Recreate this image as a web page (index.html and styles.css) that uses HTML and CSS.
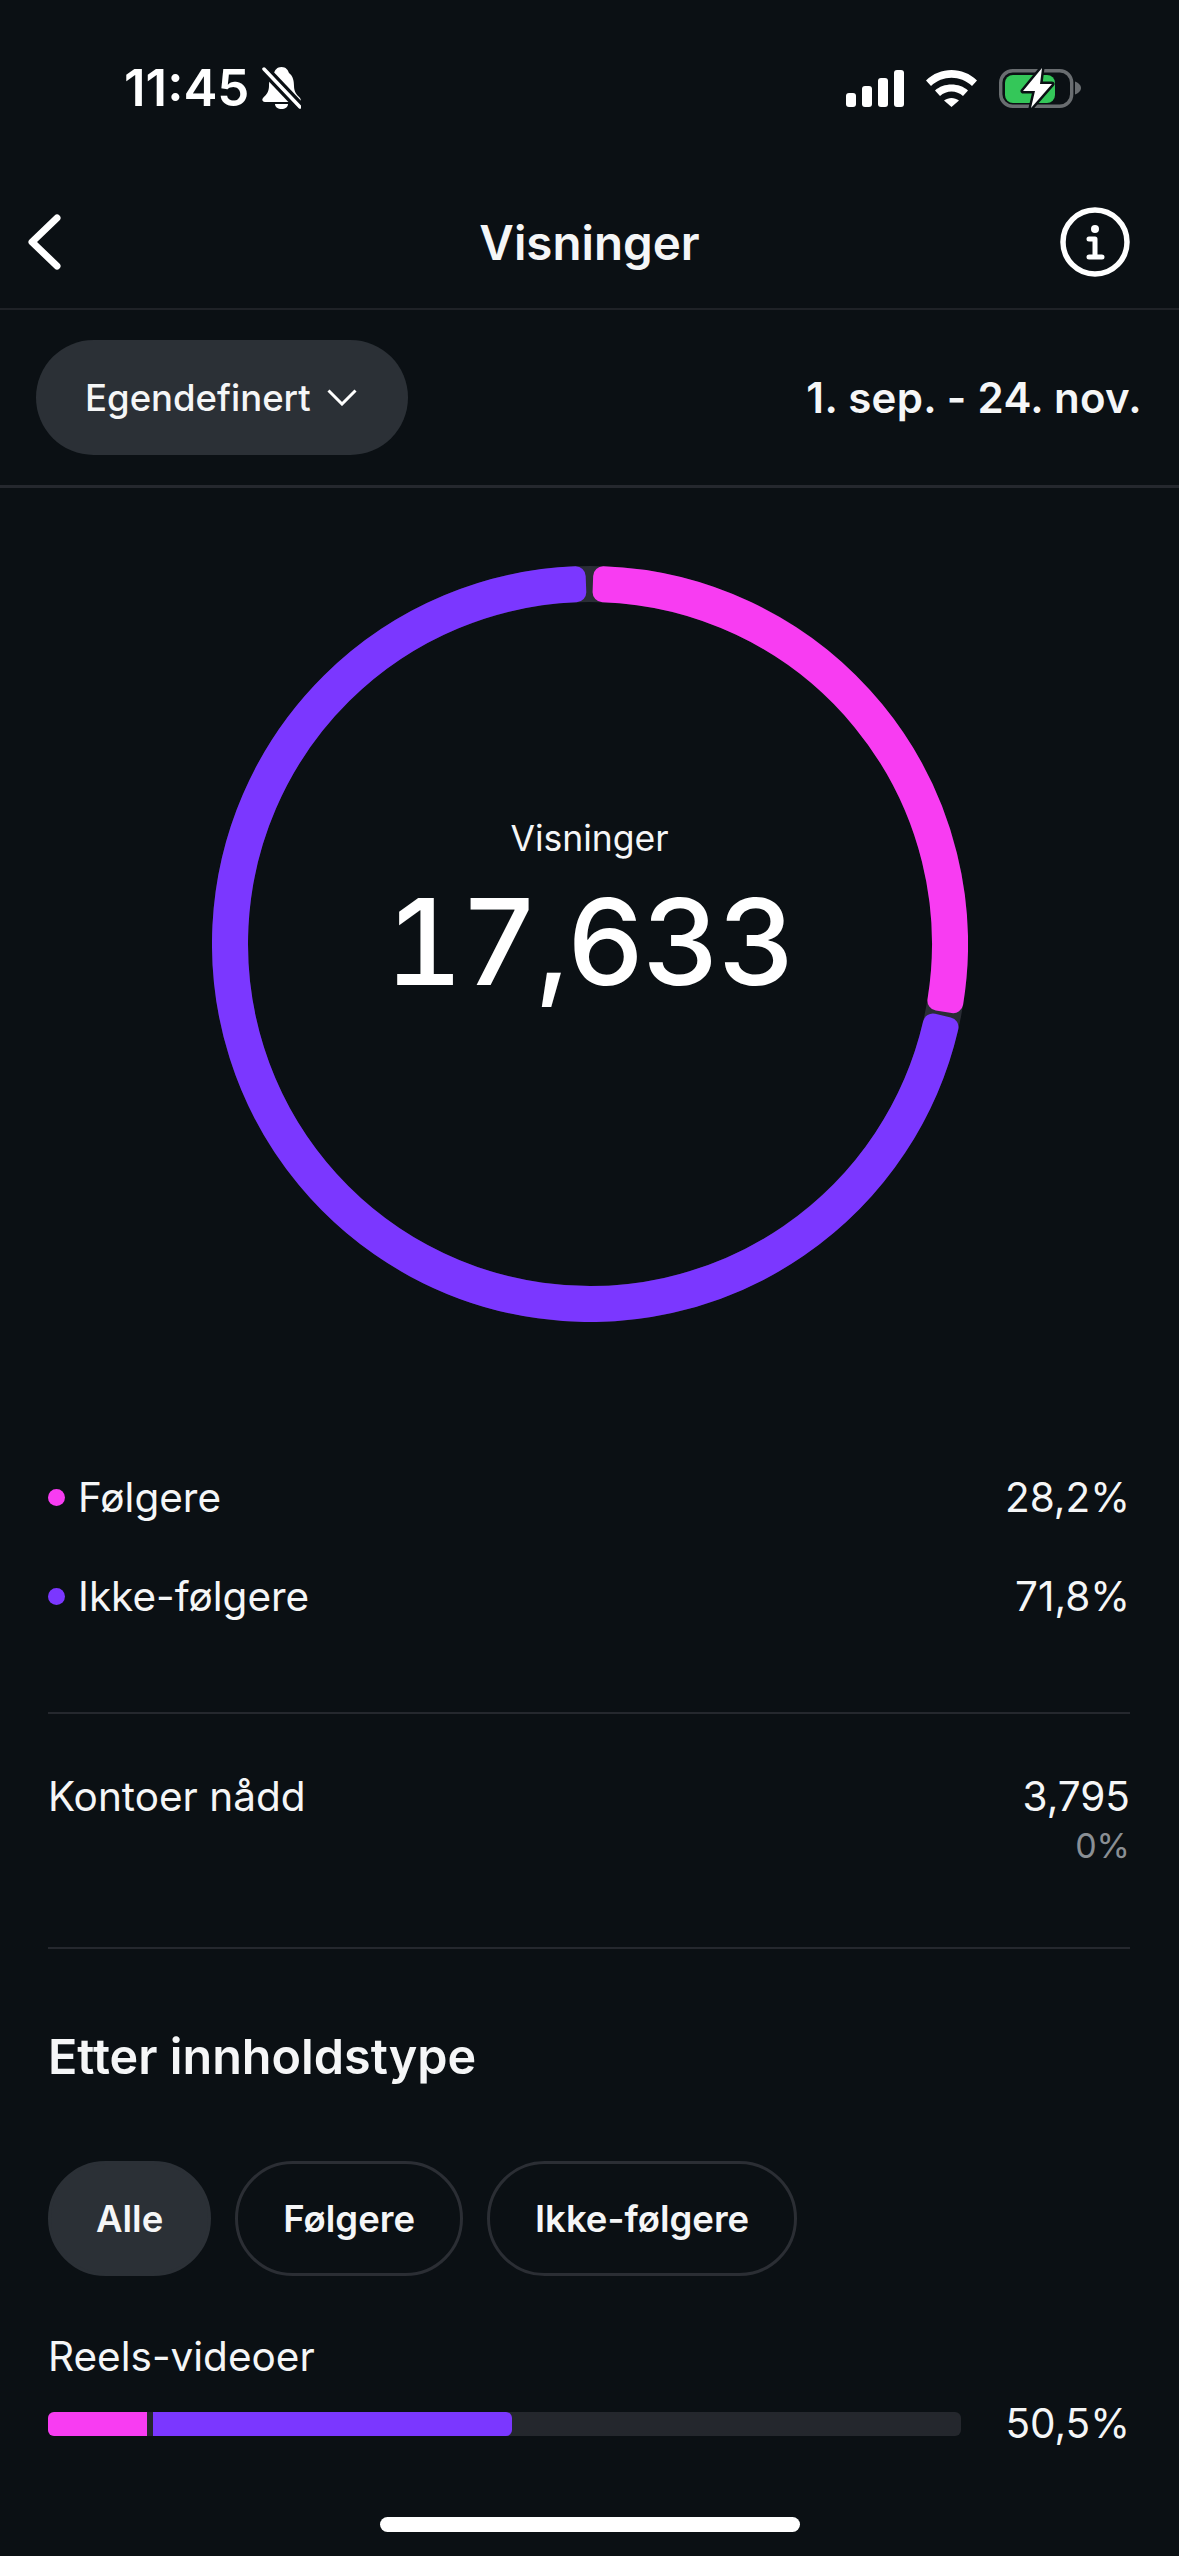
FILE: index.html
```html
<!DOCTYPE html>
<html lang="nb">
<head>
  <meta charset="UTF-8" />
  <meta name="viewport" content="width=device-width, initial-scale=1.0"/>
  <title>Visninger</title>
  <link rel="stylesheet" href="styles.css">
</head>
<body>
  <div class="status-bar">
    <div class="status-left">
      <span class="clock">11:45</span>
      <svg class="bell" viewBox="0 0 39 42" width="39" height="42">
        <path d="M19.500 0C24 0 26 3 27 6C31 9 32 14 32 19C32 25 35 28 38 31C39.500 33 38.500 35 36 35H3C.5 35-.5 33 1 31C4 28 7 25 7 19C7 14 8 9 12 6C13 3 15 0 19.500 0Z" fill="#fff"/>
        <path d="M13 37H26C26 40 23 42 19.500 42C16 42 13 40 13 37Z" fill="#fff"/>
        <path d="M1 1L38 40" stroke="#0b1014" stroke-width="10"/>
        <path d="M2 2L38 40" stroke="#fff" stroke-width="3.500" stroke-linecap="round"/>
      </svg>
    </div>
    <div class="status-right">
      <svg viewBox="0 0 58 37" width="58" height="37" fill="#fff">
        <rect x="0" y="23" width="10" height="14" rx="3"/>
        <rect x="16" y="16" width="10" height="21" rx="3"/>
        <rect x="32" y="8" width="10" height="29" rx="3"/>
        <rect x="48" y="0" width="10" height="37" rx="3"/>
      </svg>
      <svg viewBox="0 0 51 37" width="51" height="37" fill="#fff">
        <path d="M0 10.500C14-3.500 37-3.500 51 10.500L46 16C34.500 5 16.500 5 5 16Z"/>
        <path d="M9 20.500C17.500 12.500 33.500 12.500 42 20.500L37 26C30.500 20 20.500 20 14 26Z"/>
        <path d="M18 30.500C22.500 27 28.500 27 33 30.500L25.500 37Z"/>
      </svg>
      <svg class="battery" viewBox="0 0 82 40" width="82" height="40">
        <rect x="1.700" y="2.700" width="71" height="35.600" rx="12" fill="none" stroke="#696d70" stroke-width="3.400"/>
        <path d="M76 13.500C79 14.500 82 17 82 20C82 23 79 25.500 76 26.500Z" fill="#696d70"/>
        <rect x="6" y="7" width="50" height="28" rx="8" fill="#34c759"/>
        <path d="M43 0L24 23H36L32 40L53 16H41Z" fill="#fff" stroke="#0b1014" stroke-width="5" stroke-linejoin="round" paint-order="stroke"/>
      </svg>
    </div>
  </div>

  <header class="nav">
    <div class="nav-side">
      <svg viewBox="0 0 40 60" width="40" height="60">
        <path d="M33 6L8 30L33 54" fill="none" stroke="#fff" stroke-width="7" stroke-linecap="round" stroke-linejoin="round"/>
      </svg>
    </div>
    <h1 class="nav-title">Visninger</h1>
    <div class="nav-side nav-side-right">
      <svg viewBox="0 0 70 70" width="70" height="70" fill="none" stroke="#fff">
        <circle cx="35" cy="35" r="32" stroke-width="5.500"/>
        <circle cx="35" cy="22" r="4" fill="#fff" stroke="none"/>
        <path d="M29 32H35V50M29 50H42" stroke-width="5" stroke-linecap="round" stroke-linejoin="round"/>
      </svg>
    </div>
  </header>

  <div class="toolbar">
    <div class="range-pill">
      <span>Egendefinert</span>
      <svg viewBox="0 0 30 17" width="30" height="17">
        <path d="M1.500 1.500L15 15L28.500 1.500" fill="none" stroke="#fff" stroke-width="3"/>
      </svg>
    </div>
    <div class="range-date">1. sep. - 24. nov.</div>
  </div>

  <section class="chart">
    <svg class="donut" viewBox="-378 -378 756 756" width="756" height="756">
      <circle r="360" fill="none" stroke="#2a2d35" stroke-width="36"/>
      <path class="seg-pink" d="M13.160 -367.760A368 368 0 0 1 363.220 59.150L347.420 56.580A352 352 0 0 0 12.590 -351.770Z"/>
      <path class="seg-purple" d="M358.480 83.160A368 368 0 1 1 -14.320 -367.720L-13.700 -351.730A352 352 0 1 0 342.900 79.540Z"/>
    </svg>
    <div class="chart-center">
      <div class="chart-label">Visninger</div>
      <div class="chart-value">17,633</div>
    </div>
  </section>

  <section class="legend">
    <div class="legend-row">
      <span class="dot dot-pink"></span>
      <span class="legend-name">Følgere</span>
      <span>28,2%</span>
    </div>
    <div class="legend-row">
      <span class="dot dot-purple"></span>
      <span class="legend-name">Ikke-følgere</span>
      <span>71,8%</span>
    </div>
  </section>

  <section class="reach">
    <span>Kontoer nådd</span>
    <div class="reach-values">
      <div>3,795</div>
      <div class="reach-change">0%</div>
    </div>
  </section>

  <section class="content-type">
    <h2>Etter innholdstype</h2>
    <div class="chips">
      <span class="chip chip-active">Alle</span>
      <span class="chip">Følgere</span>
      <span class="chip">Ikke-følgere</span>
    </div>
    <div class="type-name">Reels-videoer</div>
    <div class="type-row">
      <div class="bar">
        <div class="bar-pink"></div>
        <div class="bar-purple"></div>
      </div>
      <span>50,5%</span>
    </div>
  </section>

  <div class="home-indicator"></div>
</body>
</html>
```

FILE: styles.css
```css
* {
  box-sizing: border-box;
}

html, body {
  margin: 0;
  height: 2556px;
  overflow: hidden;
}

body {
  position: relative;
  background: #0b1014;
  color: #f5f6f7;
  font-family: Inter, 'Noto Sans', sans-serif;
  font-size: 40.5px;
  line-height: 48px;
}

h1, h2 {
  margin: 0;
}

/* status bar */
.status-bar {
  height: 176px;
  padding: 0 98px 0 124px;
  display: flex;
  justify-content: space-between;
  align-items: center;
}

.status-left {
  display: flex;
  align-items: center;
  gap: 13px;
}

.clock {
  color: #fff;
  font-size: 51px;
  font-weight: 600;
}

.status-right {
  display: flex;
  align-items: center;
  gap: 22px;
}

/* nav */
.nav {
  height: 134px;
  padding: 0 49px 0 24px;
  display: flex;
  align-items: center;
  border-bottom: 2px solid #1f2227;
}

.nav-side {
  flex: 1;
  display: flex;
}

.nav-side-right {
  justify-content: flex-end;
}

.nav-title {
  margin-left: 25px;
  padding-top: 2px;
  font-size: 47.5px;
  font-weight: 600;
}

/* date range */
.toolbar {
  height: 178px;
  padding: 0 37px 0 36px;
  display: flex;
  justify-content: space-between;
  align-items: center;
  border-bottom: 3px solid #25282e;
}

.range-pill {
  width: 372px;
  height: 115px;
  padding-left: 49px;
  display: flex;
  align-items: center;
  gap: 16px;
  background: #2b3036;
  border-radius: 58px;
  font-size: 36.5px;
  font-weight: 500;
}

.range-date {
  font-size: 42px;
  font-weight: 600;
  letter-spacing: 0.3px;
}

/* donut */
.chart {
  position: relative;
  width: 756px;
  margin: 78px auto 0;
  height: 756px;
}

.donut {
  display: block;
}

.seg-pink,
.seg-purple {
  stroke-width: 20;
  stroke-linejoin: round;
}

.seg-pink {
  fill: #f83cf2;
  stroke: #f83cf2;
}

.seg-purple {
  fill: #7b37ff;
  stroke: #7b37ff;
}

.chart-center {
  position: absolute;
  top: 251px;
  left: 0;
  right: 0;
  text-align: center;
}

.chart-label {
  font-size: 35.5px;
  line-height: 44px;
}

.chart-value {
  margin-top: 11px;
  color: #fff;
  font-size: 120px;
  font-weight: 500;
  font-feature-settings: "tnum";
  letter-spacing: -2px;
  line-height: 140px;
}

/* legend */
.legend {
  margin: 126px 49px 0 48px;
  padding-bottom: 66px;
  border-bottom: 2px solid #25282e;
}

.legend-row {
  height: 99px;
  display: flex;
  align-items: center;
}

.legend-name {
  flex: 1;
  margin-left: 13px;
}

.dot {
  width: 17px;
  height: 17px;
  border-radius: 50%;
}

.dot-pink {
  background: #f83cf2;
}

.dot-purple {
  background: #7b37ff;
}

/* reach */
.reach {
  margin: 0 49px 0 48px;
  padding: 59px 0 76px;
  display: flex;
  justify-content: space-between;
  border-bottom: 2px solid #25282e;
}

.reach-values {
  text-align: right;
}

.reach-change {
  color: #8a8f94;
  font-size: 34px;
  line-height: 50px;
}

/* content type */
.content-type {
  margin: 78px 49px 0 48px;
}

.content-type h2 {
  font-size: 48.5px;
  font-weight: 600;
  line-height: 60px;
}

.chips {
  margin-top: 74px;
  display: flex;
  gap: 24px;
}

.chip {
  height: 115px;
  padding: 0 45px;
  display: flex;
  align-items: center;
  border: 3px solid #2b2e34;
  border-radius: 58px;
  font-size: 36.5px;
  font-weight: 600;
}

.chip-active {
  background: #2b3036;
  border-color: #2b3036;
}

.type-name {
  margin-top: 57px;
}

.type-row {
  margin-top: 19px;
  display: flex;
  justify-content: space-between;
  align-items: center;
}

.bar {
  width: 913px;
  height: 24px;
  display: flex;
  gap: 6px;
  background: #24272d;
  border-radius: 6px;
  overflow: hidden;
}

.bar-pink {
  width: 99px;
  background: #f83cf2;
}

.bar-purple {
  width: 359px;
  background: #7b37ff;
  border-radius: 0 6px 6px 0;
}

.home-indicator {
  position: absolute;
  left: 380px;
  top: 2517px;
  width: 420px;
  height: 15px;
  background: #fff;
  border-radius: 8px;
}
```
